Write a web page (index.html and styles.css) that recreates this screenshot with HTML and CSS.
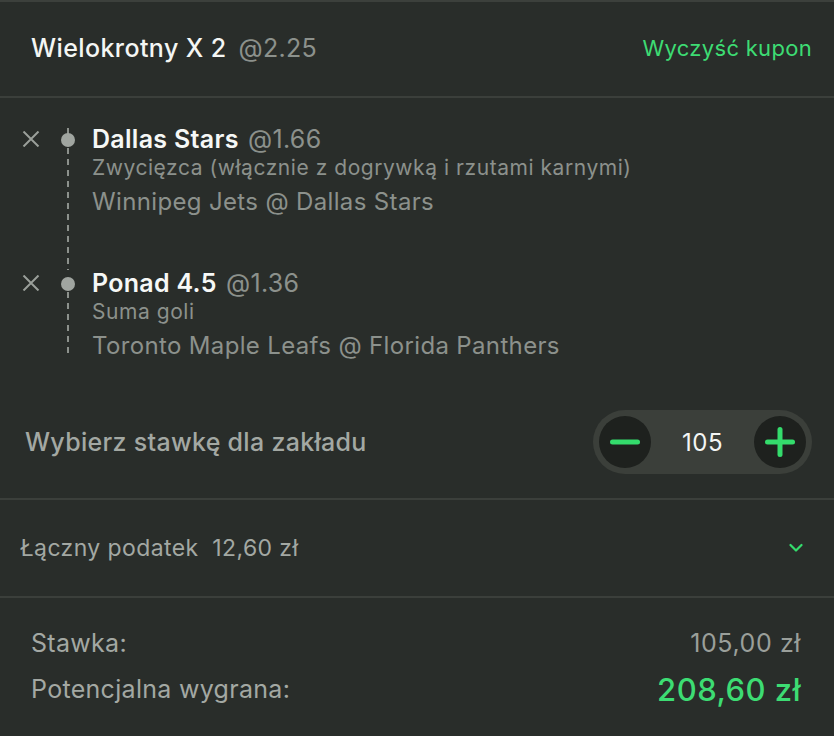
FILE: index.html
```html
<!DOCTYPE html>
<html lang="pl">
<head>
<meta charset="utf-8">
<title>Kupon</title>
<link rel="stylesheet" href="styles.css">
</head>
<body>
<div class="slip">
  <header class="head">
    <div class="head-title"><span class="head-name">Wielokrotny X 2</span><span class="head-odds">@2.25</span></div>
    <a class="clear" href="#">Wyczyść kupon</a>
  </header>

  <section class="selections">
    <div class="sel first">
      <div class="sel-x"><svg width="18" height="16" viewBox="0 0 18 16"><path d="M1.5 0.5 L16.5 15.5 M16.5 0.5 L1.5 15.5" stroke="#9a9f9a" stroke-width="2" fill="none"/></svg></div>
      <div class="sel-line"><span class="dot"></span></div>
      <div class="sel-body">
        <div class="sel-title"><b>Dallas Stars</b> <span class="odd">@1.66</span></div>
        <div class="sel-market">Zwycięzca (włącznie z dogrywką i rzutami karnymi)</div>
        <div class="sel-match">Winnipeg Jets @ Dallas Stars</div>
      </div>
    </div>
    <div class="sel last">
      <div class="sel-x"><svg width="18" height="16" viewBox="0 0 18 16"><path d="M1.5 0.5 L16.5 15.5 M16.5 0.5 L1.5 15.5" stroke="#9a9f9a" stroke-width="2" fill="none"/></svg></div>
      <div class="sel-line"><span class="dot"></span></div>
      <div class="sel-body">
        <div class="sel-title"><b>Ponad 4.5</b> <span class="odd">@1.36</span></div>
        <div class="sel-market">Suma goli</div>
        <div class="sel-match">Toronto Maple Leafs @ Florida Panthers</div>
      </div>
    </div>
  </section>

  <section class="stake">
    <div class="stake-label">Wybierz stawkę dla zakładu</div>
    <div class="stepper">
      <button class="step"><svg width="30" height="6" viewBox="0 0 30 6"><rect x="0" y="0.5" width="30" height="5" rx="2.5" fill="#34dc6c"/></svg></button>
      <span class="step-val">105</span>
      <button class="step"><svg width="30" height="30" viewBox="0 0 30 30"><rect x="0" y="12.5" width="30" height="5" rx="2.5" fill="#34dc6c"/><rect x="12.5" y="0" width="5" height="30" rx="2.5" fill="#34dc6c"/></svg></button>
    </div>
  </section>

  <section class="tax">
    <div class="tax-text">Łączny podatek&nbsp; 12,60 zł</div>
    <svg class="chev" width="14" height="10" viewBox="0 0 14 10"><path d="M1.5 2 L7 7.5 L12.5 2" stroke="#34dc6c" stroke-width="2.2" fill="none" stroke-linecap="round" stroke-linejoin="round"/></svg>
  </section>

  <section class="summary">
    <div class="sum-row"><span class="sum-label">Stawka:</span><span class="sum-val">105,00 zł</span></div>
    <div class="sum-row"><span class="sum-label">Potencjalna wygrana:</span><span class="sum-win">208,60 zł</span></div>
  </section>
</div>
</body>
</html>
```

FILE: styles.css
```css
* { box-sizing: border-box; }
html, body { margin: 0; padding: 0; }
body {
  background: #292d2a;
  font-family: Inter, "Noto Sans", sans-serif;
  color: #f2f4f2;
  width: 834px;
  height: 736px;
  overflow: hidden;
}
.slip { border-top: 2px solid #3c403c; }

.head {
  height: 96px;
  display: flex;
  align-items: center;
  justify-content: space-between;
  padding: 0 22px 2px 31px;
  border-bottom: 2px solid #3b3f3b;
}
.head-name { font-size: 25px; font-weight: 500; color: #f4f6f4; letter-spacing: 0.4px; }
.head-odds { font-size: 25px; color: #8c918c; margin-left: 12px; letter-spacing: 0.3px; }
.clear { color: #3ddc73; font-size: 22px; text-decoration: none; letter-spacing: 0.3px; }

.selections { padding: 28px 0 0 22px; }
.sel { display: flex; }
.sel.first { height: 144px; }
.sel.last { height: 95px; }
.sel-x { width: 30px; padding-top: 5px; }
.sel-line {
  width: 32px;
  position: relative;
  background: repeating-linear-gradient(to bottom, #8c918c 0 6px, transparent 6px 11px) no-repeat 15px 22px / 2px calc(100% - 22px);
}
.sel.last .sel-line { background-size: 2px calc(100% - 30px); }
.sel.first .sel-line::before {
  content: "";
  position: absolute;
  left: 15px; top: 2px;
  width: 2px; height: 8px;
  background: #8c918c;
}
.dot {
  position: absolute;
  left: 9px; top: 7px;
  width: 14px; height: 14px;
  border-radius: 50%;
  background: #a0a5a0;
}
.sel-body { margin-left: 8px; }
.sel-title { font-size: 25px; line-height: 26px; letter-spacing: 0.3px; }
.sel-title b { font-weight: 600; color: #f6f8f6; }
.sel-title .odd { color: #8c918c; font-weight: 400; margin-left: 2px; }
.sel-market { font-size: 21px; line-height: 31px; color: #8c918c; letter-spacing: 0.55px; }
.sel-match { font-size: 24px; line-height: 38px; color: #8c918c; letter-spacing: 0.35px; }

.stake {
  margin-top: 45px;
  display: flex;
  align-items: center;
  justify-content: space-between;
  padding: 0 22px 24px 25px;
  border-bottom: 2px solid #3b3f3b;
}
.stake-label { font-size: 25px; font-weight: 500; color: #a3a8a3; letter-spacing: 0.3px; }
.stepper {
  width: 219px;
  height: 64px;
  border-radius: 32px;
  background: #3b3f3a;
  display: flex;
  align-items: center;
  justify-content: space-between;
  padding: 0 6px;
}
.step {
  width: 52px; height: 52px;
  border-radius: 50%;
  border: none;
  background: #1e211e;
  display: flex;
  align-items: center;
  justify-content: center;
  padding: 0;
}
.step-val { font-size: 24px; color: #f4f6f4; letter-spacing: 0.5px; }

.tax {
  height: 98px;
  display: flex;
  align-items: center;
  justify-content: space-between;
  padding: 0 31px 0 20px;
  border-bottom: 2px solid #3b3f3b;
}
.tax-text { font-size: 23px; color: #a3a8a3; letter-spacing: 0.4px; }

.summary { padding: 22px 33px 0 31px; }
.sum-row {
  height: 46px;
  display: flex;
  align-items: center;
  justify-content: space-between;
  font-size: 25px;
  color: #a3a8a3;
}
.sum-label { letter-spacing: 0.3px; }
.sum-val { color: #9a9f9a; letter-spacing: 0.6px; }
.sum-win { color: #3ddc73; font-size: 31px; font-weight: 500; letter-spacing: 0.5px; }
```
